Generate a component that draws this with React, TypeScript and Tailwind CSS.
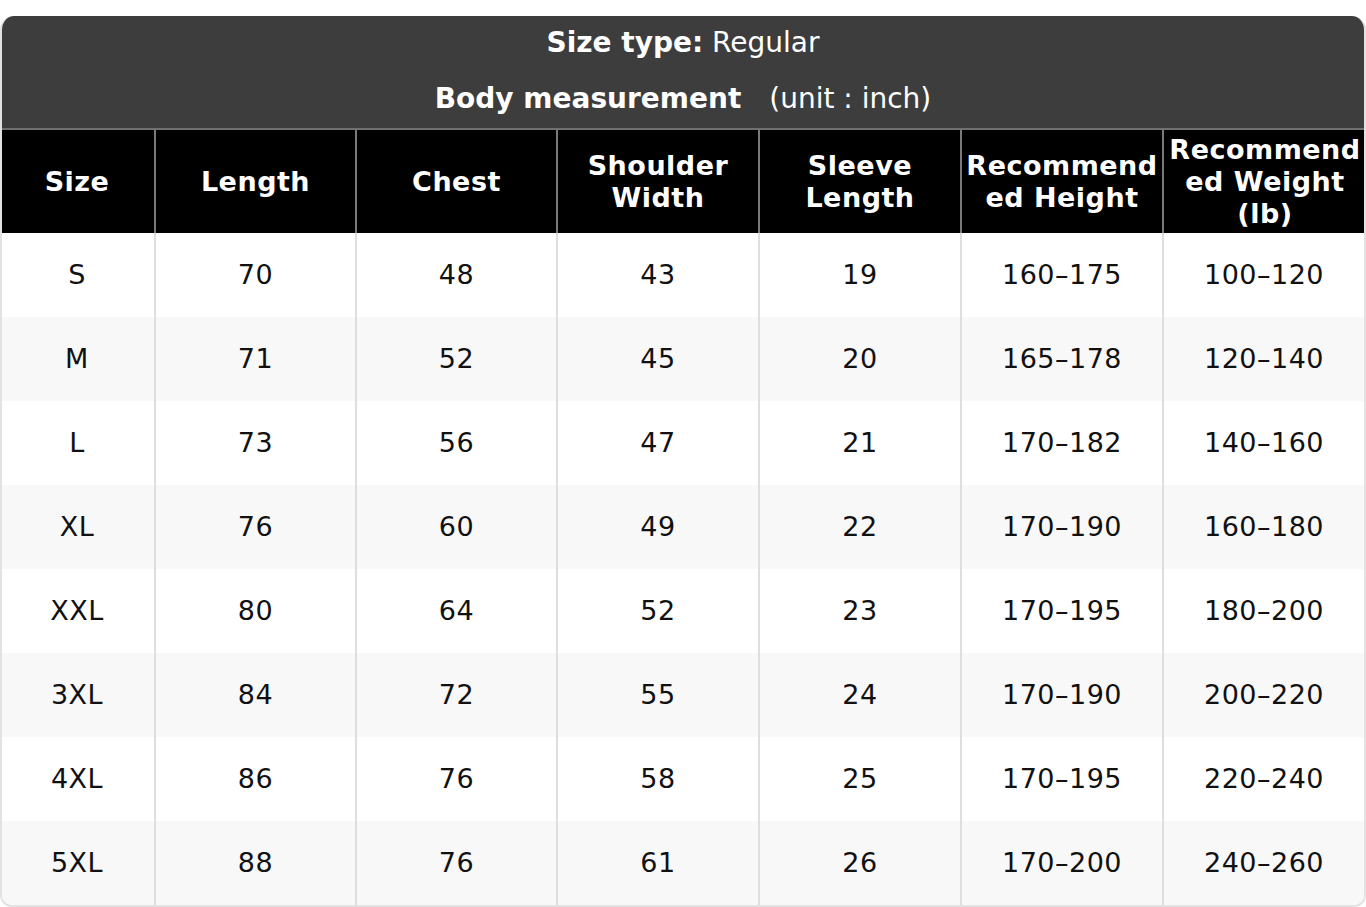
import React from "react";

const headers = ["Size", "Length", "Chest", "Shoulder Width", "Sleeve Length", "Recommended Height", "Recommended Weight (lb)"];

const rows: string[][] = [
  ["S", "70", "48", "43", "19", "160–175", "100–120"],
  ["M", "71", "52", "45", "20", "165–178", "120–140"],
  ["L", "73", "56", "47", "21", "170–182", "140–160"],
  ["XL", "76", "60", "49", "22", "170–190", "160–180"],
  ["XXL", "80", "64", "52", "23", "170–195", "180–200"],
  ["3XL", "84", "72", "55", "24", "170–190", "200–220"],
  ["4XL", "86", "76", "58", "25", "170–195", "220–240"],
  ["5XL", "88", "76", "61", "26", "170–200", "240–260"],
];

const grid = "grid grid-cols-[154px_201px_201px_202px_202px_202px_1fr]";

export default function App() {
  return (
    <div className="w-[1366px] h-[907px] bg-white pt-[16px]" style={{ fontFamily: '"DejaVu Sans", sans-serif' }}>
      <div className="rounded-t-[14px] rounded-b-[12px] overflow-hidden border-x-2 border-b-2 border-[#e2e2e2]">
        <div className="bg-[#3d3d3d] text-white text-[28px] h-[112px] flex flex-col items-center pt-[7px] -mx-[2px]">
          <div className="h-[40px] leading-[40px]">
            <span className="font-bold">Size type:</span> Regular
          </div>
          <div className="h-[40px] leading-[40px] mt-[16px]">
            <span className="font-bold">Body measurement</span>
            <span className="ml-[28px]">(unit : inch)</span>
          </div>
        </div>
        <div className={`${grid} bg-black border-t-2 border-[#707070] h-[105px] -mx-[2px]`}>
          {headers.map((h, i) => (
            <div
              key={i}
              className={`flex items-center justify-center text-center text-white font-bold text-[27px] leading-[32px] tracking-[0.5px] px-[2px] whitespace-nowrap ${i > 0 ? "border-l-2 border-[#7a7a7a]" : ""}`}
            >
              {h === "Recommended Height" ? (
                <span>Recommend<br />ed Height</span>
              ) : h === "Recommended Weight (lb)" ? (
                <span>Recommend<br />ed Weight<br />(lb)</span>
              ) : h === "Shoulder Width" ? (
                <span>Shoulder<br />Width</span>
              ) : h === "Sleeve Length" ? (
                <span>Sleeve<br />Length</span>
              ) : (
                h
              )}
            </div>
          ))}
        </div>
        {rows.map((r, ri) => (
          <div key={ri} className={`${grid} h-[84px] -ml-[2px] ${ri % 2 === 1 ? "bg-[#f8f8f8]" : "bg-white"}`}>
            {r.map((c, ci) => (
              <div
                key={ci}
                className={`flex items-center justify-center text-[27px] text-[#111] tracking-[0.5px] ${ci > 0 ? "border-l-2 border-[#dedede]" : ""}`}
              >
                {c}
              </div>
            ))}
          </div>
        ))}
      </div>
    </div>
  );
}
